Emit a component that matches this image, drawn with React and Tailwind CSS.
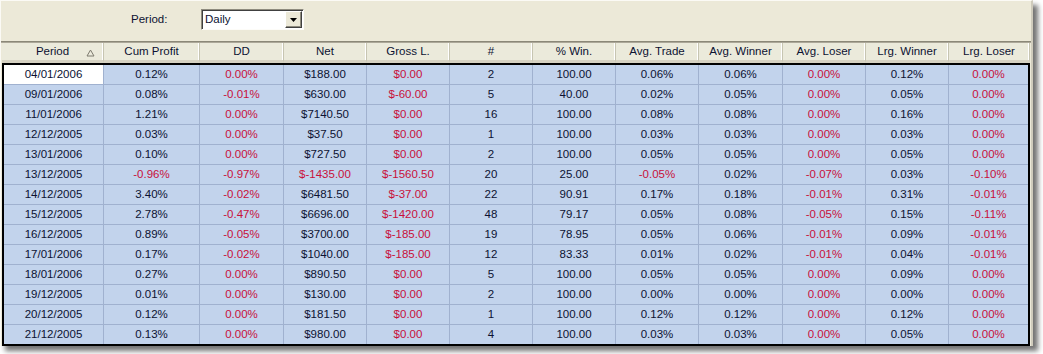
import React from 'react';

const columns = [
  { label: 'Period', w: 'w-[102px]', bw: 'w-[100px]' },
  { label: 'Cum Profit', w: 'w-[96px]', bw: 'w-[96px]' },
  { label: 'DD', w: 'w-[84px]', bw: 'w-[84px]', red: true },
  { label: 'Net', w: 'w-[83px]', bw: 'w-[83px]' },
  { label: 'Gross L.', w: 'w-[83px]', bw: 'w-[83px]', red: true },
  { label: '#', w: 'w-[83px]', bw: 'w-[83px]' },
  { label: '% Win.', w: 'w-[83px]', bw: 'w-[83px]' },
  { label: 'Avg. Trade', w: 'w-[83px]', bw: 'w-[83px]' },
  { label: 'Avg. Winner', w: 'w-[84px]', bw: 'w-[84px]' },
  { label: 'Avg. Loser', w: 'w-[83px]', bw: 'w-[83px]', red: true },
  { label: 'Lrg. Winner', w: 'w-[83px]', bw: 'w-[83px]' },
  { label: 'Lrg. Loser', w: 'w-[81px]', bw: 'w-[79px]', red: true },
];

const rows = [
  ['04/01/2006', '0.12%', '0.00%', '$188.00', '$0.00', '2', '100.00', '0.06%', '0.06%', '0.00%', '0.12%', '0.00%'],
  ['09/01/2006', '0.08%', '-0.01%', '$630.00', '$-60.00', '5', '40.00', '0.02%', '0.05%', '0.00%', '0.05%', '0.00%'],
  ['11/01/2006', '1.21%', '0.00%', '$7140.50', '$0.00', '16', '100.00', '0.08%', '0.08%', '0.00%', '0.16%', '0.00%'],
  ['12/12/2005', '0.03%', '0.00%', '$37.50', '$0.00', '1', '100.00', '0.03%', '0.03%', '0.00%', '0.03%', '0.00%'],
  ['13/01/2006', '0.10%', '0.00%', '$727.50', '$0.00', '2', '100.00', '0.05%', '0.05%', '0.00%', '0.05%', '0.00%'],
  ['13/12/2005', '-0.96%', '-0.97%', '$-1435.00', '$-1560.50', '20', '25.00', '-0.05%', '0.02%', '-0.07%', '0.03%', '-0.10%'],
  ['14/12/2005', '3.40%', '-0.02%', '$6481.50', '$-37.00', '22', '90.91', '0.17%', '0.18%', '-0.01%', '0.31%', '-0.01%'],
  ['15/12/2005', '2.78%', '-0.47%', '$6696.00', '$-1420.00', '48', '79.17', '0.05%', '0.08%', '-0.05%', '0.15%', '-0.11%'],
  ['16/12/2005', '0.89%', '-0.05%', '$3700.00', '$-185.00', '19', '78.95', '0.05%', '0.06%', '-0.01%', '0.09%', '-0.01%'],
  ['17/01/2006', '0.17%', '-0.02%', '$1040.00', '$-185.00', '12', '83.33', '0.01%', '0.02%', '-0.01%', '0.04%', '-0.01%'],
  ['18/01/2006', '0.27%', '0.00%', '$890.50', '$0.00', '5', '100.00', '0.05%', '0.05%', '0.00%', '0.09%', '0.00%'],
  ['19/12/2005', '0.01%', '0.00%', '$130.00', '$0.00', '2', '100.00', '0.00%', '0.00%', '0.00%', '0.00%', '0.00%'],
  ['20/12/2005', '0.12%', '0.00%', '$181.50', '$0.00', '1', '100.00', '0.12%', '0.12%', '0.00%', '0.12%', '0.00%'],
  ['21/12/2005', '0.13%', '0.00%', '$980.00', '$0.00', '4', '100.00', '0.03%', '0.03%', '0.00%', '0.05%', '0.00%'],
];

// sort marker in the Period header
const SortUp = () => (
  <svg width="9" height="8" viewBox="0 0 9 8" className="absolute right-[8px] top-[6px]">
    <path d="M4.5 1 L8 7 L1 7 Z" fill="none" stroke="#7d7a6e" strokeWidth="1" />
  </svg>
);

const HeaderCell = ({ col, i }) => (
  <div
    className={`${col.w} relative h-[20px] flex items-center justify-center bg-[#ebeadb] border-b-[3px] border-b-[#d6d2c2] border-r border-r-[#c7c5b2] shadow-[inset_-1px_0_0_#ffffff]`}
  >
    <span>{col.label}</span>
    {i === 0 && <SortUp />}
  </div>
);

const App = () => {
  return (
    <div className="w-[1043px] h-[354px] bg-white font-['Liberation_Sans',Arial,sans-serif] text-[11.5px] text-[#0c1232]">
      <div className="w-[1033px] h-[346px] bg-[#ece9d8] border-t border-l border-t-[#fbfaf5] border-l-[#fbfaf5] border-r-2 border-r-[#cfcbbc] shadow-[5px_5px_5px_rgba(0,0,0,0.55)] flex flex-col">
        {/* period selector */}
        <div className="h-[42px] flex items-center pl-[130px] pb-[3px]">
          <span className="w-[70px]">Period:</span>
          <div className="w-[103px] h-[21px] flex items-center bg-white border border-t-[#8e8b7e] border-l-[#8e8b7e] border-r-[#fdfcf8] border-b-[#fdfcf8] shadow-[inset_1px_1px_0_#404040]">
            <span className="flex-1 pl-[3px] pt-[1px]">Daily</span>
            <div className="w-[17px] h-[17px] mr-[1px] flex items-center justify-center bg-[#ece9d8] border border-t-[#ffffff] border-l-[#ffffff] border-r-[#404040] border-b-[#404040] shadow-[inset_-1px_-1px_0_#8e8b7e]">
              <svg width="7" height="4" viewBox="0 0 7 4">
                <path d="M0 0 H7 L3.5 4 Z" fill="#000" />
              </svg>
            </div>
          </div>
        </div>
        <div className="h-[1px] bg-[#8b8878]" />
        <div className="h-[1px] bg-[#aca899]" />

        {/* grid */}
        <div className="pl-[1px]">
          <div className="flex">
            {columns.map((col, i) => (
              <HeaderCell key={col.label} col={col} i={i} />
            ))}
          </div>
          <div className="w-[1028px] border-2 border-black bg-[#c2d3ec]">
            {rows.map((row, r) => (
              <div key={r} className="flex h-[20px] border-b border-b-[#a0b1cf] last:border-b-0 last:h-[19px]">
                {row.map((val, c) => {
                  const col = columns[c];
                  const red = col.red || val.startsWith('-') || val.startsWith('$-');
                  const bg = r === 0 && c === 0 ? 'bg-white' : '';
                  return (
                    <div
                      key={c}
                      className={`${col.bw} ${bg} flex items-center justify-center border-r border-r-[#a0b1cf] last:border-r-0 ${red ? 'text-[#c8103a]' : ''}`}
                    >
                      {val}
                    </div>
                  );
                })}
              </div>
            ))}
          </div>
        </div>
      </div>
    </div>
  );
};

export default App;
